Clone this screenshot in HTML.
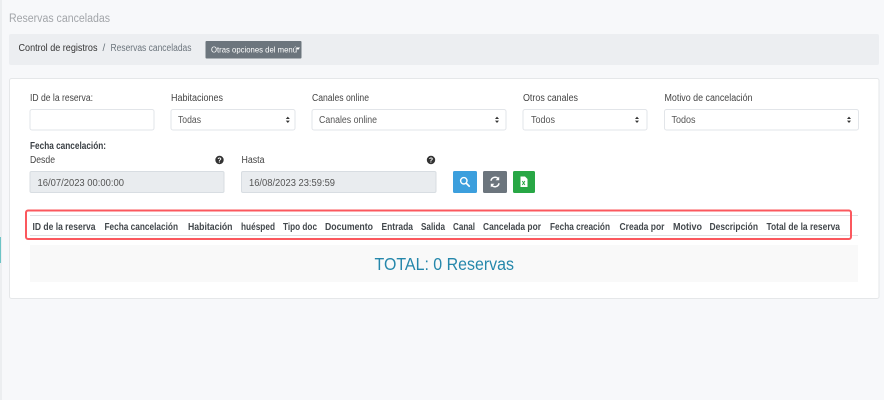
<!DOCTYPE html>
<html lang="es">
<head>
<meta charset="utf-8">
<title>Reservas canceladas</title>
<style>
html,body{margin:0;padding:0;width:884px;height:400px;overflow:hidden;background:#f7f8fa}
svg{display:block;position:absolute;left:0;top:0;filter:blur(0.25px)}
text{font-family:"Liberation Sans",sans-serif;font-size:9px;fill:#444}
.l{font-size:10px;fill:#444}
.v{font-size:10px;fill:#555}
.h{font-size:10px;font-weight:bold;fill:#43484c}
.f{fill:#fff;stroke:#e2e5e9;stroke-width:1}
</style>
</head>
<body>
<svg width="884" height="400" viewBox="0 0 884 400" xmlns="http://www.w3.org/2000/svg">
  <rect width="884" height="400" fill="#f7f8fa"/>
  <rect x="0" y="0" width="2" height="400" fill="#eceef0"/>
  <rect x="0" y="237" width="1" height="26" fill="#6cc4c6"/>

  <text x="9" y="22" textLength="101" lengthAdjust="spacingAndGlyphs" style="font-size:11.5px;fill:#a2a5a9">Reservas canceladas</text>

  <rect x="9" y="34" width="870" height="31" rx="2" fill="#eceef1"/>
  <text x="18.5" y="51" textLength="79" lengthAdjust="spacingAndGlyphs" style="font-size:10px;fill:#333">Control de registros</text>
  <text x="102.5" y="51" style="font-size:10px;fill:#6c757d">/</text>
  <text x="110.5" y="51" textLength="81" lengthAdjust="spacingAndGlyphs" style="font-size:10px;fill:#6c757d">Reservas canceladas</text>
  <rect x="205.5" y="41" width="96" height="17.5" rx="1" fill="#6c757d"/>
  <text x="211" y="52.5" textLength="86" lengthAdjust="spacingAndGlyphs" style="font-size:8.5px;fill:#fff">Otras opciones del menú</text>
  <path d="M296 47.5h4l-2 2.5z" fill="#fff"/>

  <rect x="9.5" y="78.5" width="869.5" height="220" rx="2" fill="#fff" stroke="#e5e7e9"/>

  <text class="l" x="30" y="101" textLength="63" lengthAdjust="spacingAndGlyphs">ID de la reserva:</text>
  <text class="l" x="171" y="101" textLength="52" lengthAdjust="spacingAndGlyphs">Habitaciones</text>
  <text class="l" x="312" y="101" textLength="57" lengthAdjust="spacingAndGlyphs">Canales online</text>
  <text class="l" x="523" y="101" textLength="55" lengthAdjust="spacingAndGlyphs">Otros canales</text>
  <text class="l" x="664.5" y="101" textLength="88" lengthAdjust="spacingAndGlyphs">Motivo de cancelación</text>

  <rect class="f" x="30" y="109.5" width="124" height="20.5" rx="2"/>
  <rect class="f" x="171" y="109.5" width="124" height="20.5" rx="2"/>
  <rect class="f" x="312" y="109.5" width="194" height="20.5" rx="2"/>
  <rect class="f" x="523" y="109.5" width="124" height="20.5" rx="2"/>
  <rect class="f" x="664.5" y="109.5" width="194" height="20.5" rx="2"/>

  <text class="v" x="178" y="123" textLength="23" lengthAdjust="spacingAndGlyphs">Todas</text>
  <text class="v" x="319" y="123" textLength="58" lengthAdjust="spacingAndGlyphs">Canales online</text>
  <text class="v" x="531" y="123" textLength="24" lengthAdjust="spacingAndGlyphs">Todos</text>
  <text class="v" x="671.5" y="123" textLength="24" lengthAdjust="spacingAndGlyphs">Todos</text>

  <g fill="#333">
    <path d="M285.8 119l2-2.4 2 2.4zM285.8 120.6h4l-2 2.4z"/>
    <path d="M495 119l2-2.4 2 2.4zM495 120.6h4l-2 2.4z"/>
    <path d="M635 119l2-2.4 2 2.4zM635 120.6h4l-2 2.4z"/>
    <path d="M847 119l2-2.4 2 2.4zM847 120.6h4l-2 2.4z"/>
  </g>

  <text x="30" y="149" textLength="76" lengthAdjust="spacingAndGlyphs" style="font-size:10px;font-weight:bold;fill:#3a3f44">Fecha cancelación:</text>
  <text class="l" x="30" y="163" textLength="25" lengthAdjust="spacingAndGlyphs">Desde</text>
  <text class="l" x="241.5" y="163" textLength="23" lengthAdjust="spacingAndGlyphs">Hasta</text>

  <circle cx="219.5" cy="160" r="4.2" fill="#333"/>
  <text x="219.5" y="162.7" text-anchor="middle" style="font-size:7px;font-weight:bold;fill:#fff">?</text>
  <circle cx="431" cy="160" r="4.2" fill="#333"/>
  <text x="431" y="162.7" text-anchor="middle" style="font-size:7px;font-weight:bold;fill:#fff">?</text>

  <rect x="30" y="171.5" width="194" height="21" rx="1.5" fill="#e9ecef" stroke="#d8dde2"/>
  <rect x="241.5" y="171.5" width="194.5" height="21" rx="1.5" fill="#e9ecef" stroke="#d8dde2"/>
  <text class="v" x="37.5" y="186" textLength="86.5" lengthAdjust="spacingAndGlyphs">16/07/2023 00:00:00</text>
  <text class="v" x="249" y="186" textLength="86" lengthAdjust="spacingAndGlyphs">16/08/2023 23:59:59</text>

  <rect x="453" y="171" width="24" height="22" rx="1.5" fill="#3c9fdd"/>
  <circle cx="463.8" cy="180.8" r="3.2" fill="none" stroke="#fff" stroke-width="1.4"/>
  <path d="M466.2 183.2l3 3" stroke="#fff" stroke-width="1.7" stroke-linecap="round"/>

  <rect x="483" y="171" width="24" height="22" rx="1.5" fill="#6c757d"/>
  <path d="M491 180.8a4.2 4.2 0 0 1 7.2-2.2M499 183.2a4.2 4.2 0 0 1-7.2 2.2" fill="none" stroke="#fff" stroke-width="1.5"/>
  <path d="M499.2 176.6v3.6h-3.6zM490.8 187.4v-3.6h3.6z" fill="#fff"/>

  <rect x="513" y="171" width="22" height="22" rx="1.5" fill="#28a745"/>
  <path d="M520.5 176.5h4.5l2.5 2.5v8h-7z" fill="#fff"/>
  <path d="M522.3 181l2.6 4M524.9 181l-2.6 4" stroke="#28a745" stroke-width="1"/>

  <path d="M30 215.5H858M30 235.5H858" stroke="#e0e2e5" stroke-width="1"/>
  <g>
    <text class="h" x="32.5" y="230" textLength="63" lengthAdjust="spacingAndGlyphs">ID de la reserva</text>
    <text class="h" x="104.5" y="230" textLength="73.5" lengthAdjust="spacingAndGlyphs">Fecha cancelación</text>
    <text class="h" x="188" y="230" textLength="44.5" lengthAdjust="spacingAndGlyphs">Habitación</text>
    <text class="h" x="241" y="230" textLength="34" lengthAdjust="spacingAndGlyphs">huésped</text>
    <text class="h" x="283" y="230" textLength="34" lengthAdjust="spacingAndGlyphs">Tipo doc</text>
    <text class="h" x="325" y="230" textLength="48" lengthAdjust="spacingAndGlyphs">Documento</text>
    <text class="h" x="381.5" y="230" textLength="31.5" lengthAdjust="spacingAndGlyphs">Entrada</text>
    <text class="h" x="421" y="230" textLength="24" lengthAdjust="spacingAndGlyphs">Salida</text>
    <text class="h" x="453" y="230" textLength="22" lengthAdjust="spacingAndGlyphs">Canal</text>
    <text class="h" x="483" y="230" textLength="58" lengthAdjust="spacingAndGlyphs">Cancelada por</text>
    <text class="h" x="550" y="230" textLength="60" lengthAdjust="spacingAndGlyphs">Fecha creación</text>
    <text class="h" x="619.5" y="230" textLength="45" lengthAdjust="spacingAndGlyphs">Creada por</text>
    <text class="h" x="673" y="230" textLength="29" lengthAdjust="spacingAndGlyphs">Motivo</text>
    <text class="h" x="709.5" y="230" textLength="48.5" lengthAdjust="spacingAndGlyphs">Descripción</text>
    <text class="h" x="766.5" y="230" textLength="73.5" lengthAdjust="spacingAndGlyphs">Total de la reserva</text>
  </g>

  <rect x="26" y="210.5" width="825" height="28.5" rx="2" fill="none" stroke="#fb585e" stroke-width="2"/>

  <rect x="30" y="245" width="828" height="37" fill="#f9f9f9"/>
  <text x="374.5" y="270" textLength="139.5" lengthAdjust="spacingAndGlyphs" style="font-size:17.5px;fill:#2587ab">TOTAL: 0 Reservas</text>
</svg>
</body>
</html>
